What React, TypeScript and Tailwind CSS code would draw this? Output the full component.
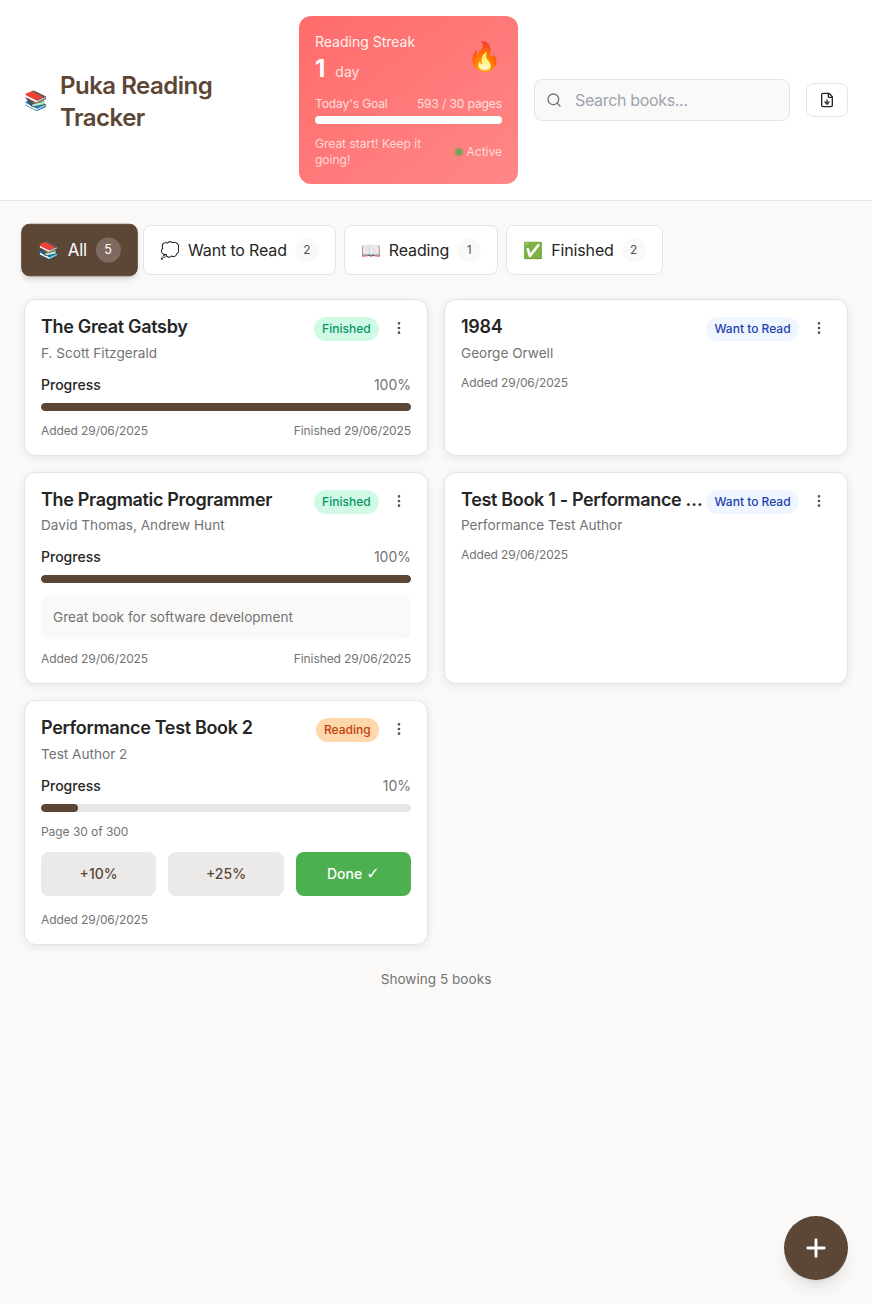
import React from "react";
import { Search, FileDown, MoreVertical, Plus } from "lucide-react";

type Book = {
  title: string;
  author: string;
  status: "Finished" | "Want to Read" | "Reading";
  progress?: number;
  page?: string;
  note?: string;
  finished?: boolean;
  actions?: boolean;
};

const badge: Record<string, string> = {
  Finished: "bg-[#d1fae5] text-[#059669]",
  "Want to Read": "bg-[#eff6ff] text-[#1e40af]",
  Reading: "bg-[#fed7aa] text-[#c2410c]",
};

function Card({ b }: { b: Book }) {
  const hasProgress = b.progress !== undefined;
  return (
    <div className={`bg-white border border-[#e5e5e5] rounded-xl px-4 pb-4 shadow-[0_2px_8px_rgba(0,0,0,0.08)] ${b.actions ? "pt-[16.4px]" : "pt-4"}`}>
      <div className="flex items-start justify-between">
        <div className="min-w-0 flex-1 pr-[2px]">
          <div className="text-[18px] leading-[22.4px] font-semibold tracking-[-0.33px] text-[#262626] truncate">{b.title}</div>
          <div className="text-[13.6px] leading-[20px] text-[#737373] mt-[4px]">{b.author}</div>
        </div>
        <div className="flex items-center shrink-0 mt-[1px]">
          <span className={`text-[12px] leading-[16px] font-medium px-[8.4px] py-1 rounded-full ${badge[b.status]}`}>{b.status}</span>
          <span className="w-6 ml-2 -mt-[2px] flex justify-center text-[#525252]"><MoreVertical size={16} /></span>
        </div>
      </div>
      {hasProgress && (
        <div className="mt-3">
          <div className="flex justify-between text-[14px] leading-[20px]">
            <span className="font-medium text-[#262626]">Progress</span>
            <span className="text-[#737373]">{b.progress}%</span>
          </div>
          <div className="h-2 mt-2 rounded-full bg-[#e5e7eb] overflow-hidden">
            <div className="h-full rounded-full bg-[#5c4636]" style={{ width: `${b.progress}%` }} />
          </div>
        </div>
      )}
      {b.page && <div className="text-[12px] leading-[16px] tracking-[-0.05px] text-[#737373] mt-3">{b.page}</div>}
      {b.actions && (
        <div className="grid grid-cols-3 gap-3 mt-3 text-[14px] font-medium">
          <div className="h-11 rounded-lg bg-[#ebeae9] text-[#5c4636] flex items-center justify-center">+10%</div>
          <div className="h-11 rounded-lg bg-[#ebeae9] text-[#5c4636] flex items-center justify-center">+25%</div>
          <div className="h-11 rounded-lg bg-[#4caf50] text-white flex items-center justify-center gap-1">
            Done <span className="font-['DejaVu_Sans',sans-serif] font-normal text-[16px] leading-none">✓</span>
          </div>
        </div>
      )}
      {b.note && (
        <div className="mt-3 rounded-lg bg-[#faf9f7] p-3 text-[13.6px] leading-[20px] text-[#737373]">{b.note}</div>
      )}
      <div className={`flex justify-between text-[12px] leading-[16px] tracking-[-0.1px] text-[#737373] ${b.actions ? "mt-4" : "mt-3"}`}>
        <span>Added 29/06/2025</span>
        {b.finished && <span>Finished 29/06/2025</span>}
      </div>
    </div>
  );
}

function Tab({ emoji, label, count, active }: { emoji: string; label: string; count: number; active?: boolean }) {
  return (
    <div
      className={
        active
          ? "w-[111px] h-[50px] flex items-center justify-center gap-2 rounded-lg bg-[#5c4636] text-white border border-[#5c4636] scale-105 shadow-md"
          : "h-[50px] flex items-center gap-2 px-4 rounded-lg bg-white text-[#262626] border border-[#e5e5e5]"
      }
    >
      <span className="w-5 text-[16px] leading-none text-center">{emoji}</span>
      <span className="text-[16px] tracking-[-0.15px]">{label}</span>
      <span
        className={
          active
            ? "w-6 h-6 rounded-full bg-white/20 flex items-center justify-center text-[12px]"
            : "w-6 h-6 rounded-full bg-[#faf9f7] text-[#525252] flex items-center justify-center text-[12px]"
        }
      >
        {count}
      </span>
    </div>
  );
}

export default function App() {
  return (
    <div className="min-h-[1304px] bg-[#faf9f7] font-['Inter',sans-serif]">
      <header className="h-[201px] bg-white border-b border-[#e5e5e5] pl-6 pr-6 flex items-center">
        <div className="w-[275px] flex items-center gap-3 shrink-0 mt-[3px]">
          <span className="w-6 text-[19px] leading-none -mt-[3px]">📚</span>
          <h1 className="text-[24px] leading-[32px] font-semibold tracking-[-0.5px] text-[#5c4636] w-[170px]">Puka Reading Tracker</h1>
        </div>
        <div className="w-[219px] h-[168px] shrink-0 rounded-xl bg-gradient-to-br from-[#ff6b6b] to-[#ff8787] text-white p-4">
          <div className="flex justify-between">
            <div>
              <div className="text-[14px] leading-[20px] opacity-90">Reading Streak</div>
              <div className="flex items-baseline gap-2 mt-[1px]">
                <span className="text-[24px] leading-[32px] font-bold">1</span>
                <span className="text-[14px] opacity-80 ml-0.5">day</span>
              </div>
            </div>
            <span className="text-[28px] leading-[36px] mt-[6px]">🔥</span>
          </div>
          <div className="flex justify-between text-[12px] leading-[16px] tracking-[-0.1px] opacity-75 mt-[11px]">
            <span>Today's Goal</span>
            <span>593 / 30 pages</span>
          </div>
          <div className="h-2 rounded-full bg-white mt-[4px]" />
          <div className="flex items-center justify-between mt-[12px]">
            <span className="text-[12px] leading-[16px] opacity-70 w-[110px]">Great start! Keep it going!</span>
            <span className="flex items-center gap-1 text-[12px] leading-[16px] opacity-70">
              <span className="w-2 h-2 rounded-full bg-[#4caf50]" />
              Active
            </span>
          </div>
        </div>
        <div className="ml-4 w-[256px] h-[42px] shrink-0 rounded-lg border border-[#e5e5e5] bg-[#faf9f7] flex items-center pl-[11px] gap-[13px] -mt-[1px]">
          <Search size={16} className="text-[#737373]" />
          <span className="text-[16px] tracking-[-0.33px] text-[#9ca3af]">Search books...</span>
        </div>
        <div className="ml-4 w-[42px] h-[34px] shrink-0 rounded-lg border border-[#e5e5e5] bg-white flex items-center justify-center text-[#262626] -mt-[1px]">
          <FileDown size={16} />
        </div>
      </header>
      <main className="px-6 pt-6">
        <div className="flex gap-2">
          <Tab emoji="📚" label="All" count={5} active />
          <Tab emoji="💭" label="Want to Read" count={2} />
          <Tab emoji="📖" label="Reading" count={1} />
          <Tab emoji="✅" label="Finished" count={2} />
        </div>
        <div className="grid grid-cols-2 gap-4 mt-[24.2px]">
          <Card b={{ title: "The Great Gatsby", author: "F. Scott Fitzgerald", status: "Finished", progress: 100, finished: true }} />
          <Card b={{ title: "1984", author: "George Orwell", status: "Want to Read" }} />
          <Card b={{ title: "The Pragmatic Programmer", author: "David Thomas, Andrew Hunt", status: "Finished", progress: 100, note: "Great book for software development", finished: true }} />
          <Card b={{ title: "Test Book 1 - Performance Testing Book", author: "Performance Test Author", status: "Want to Read" }} />
          <Card b={{ title: "Performance Test Book 2", author: "Test Author 2", status: "Reading", progress: 10, page: "Page 30 of 300", actions: true }} />
        </div>
        <div className="text-center text-[13.6px] leading-[20px] text-[#737373] mt-6">Showing 5 books</div>
      </main>
      <div className="fixed right-6 bottom-6 w-16 h-16 rounded-full bg-[#5c4636] text-white flex items-center justify-center shadow-lg">
        <Plus size={28} strokeWidth={2.5} />
      </div>
    </div>
  );
}
